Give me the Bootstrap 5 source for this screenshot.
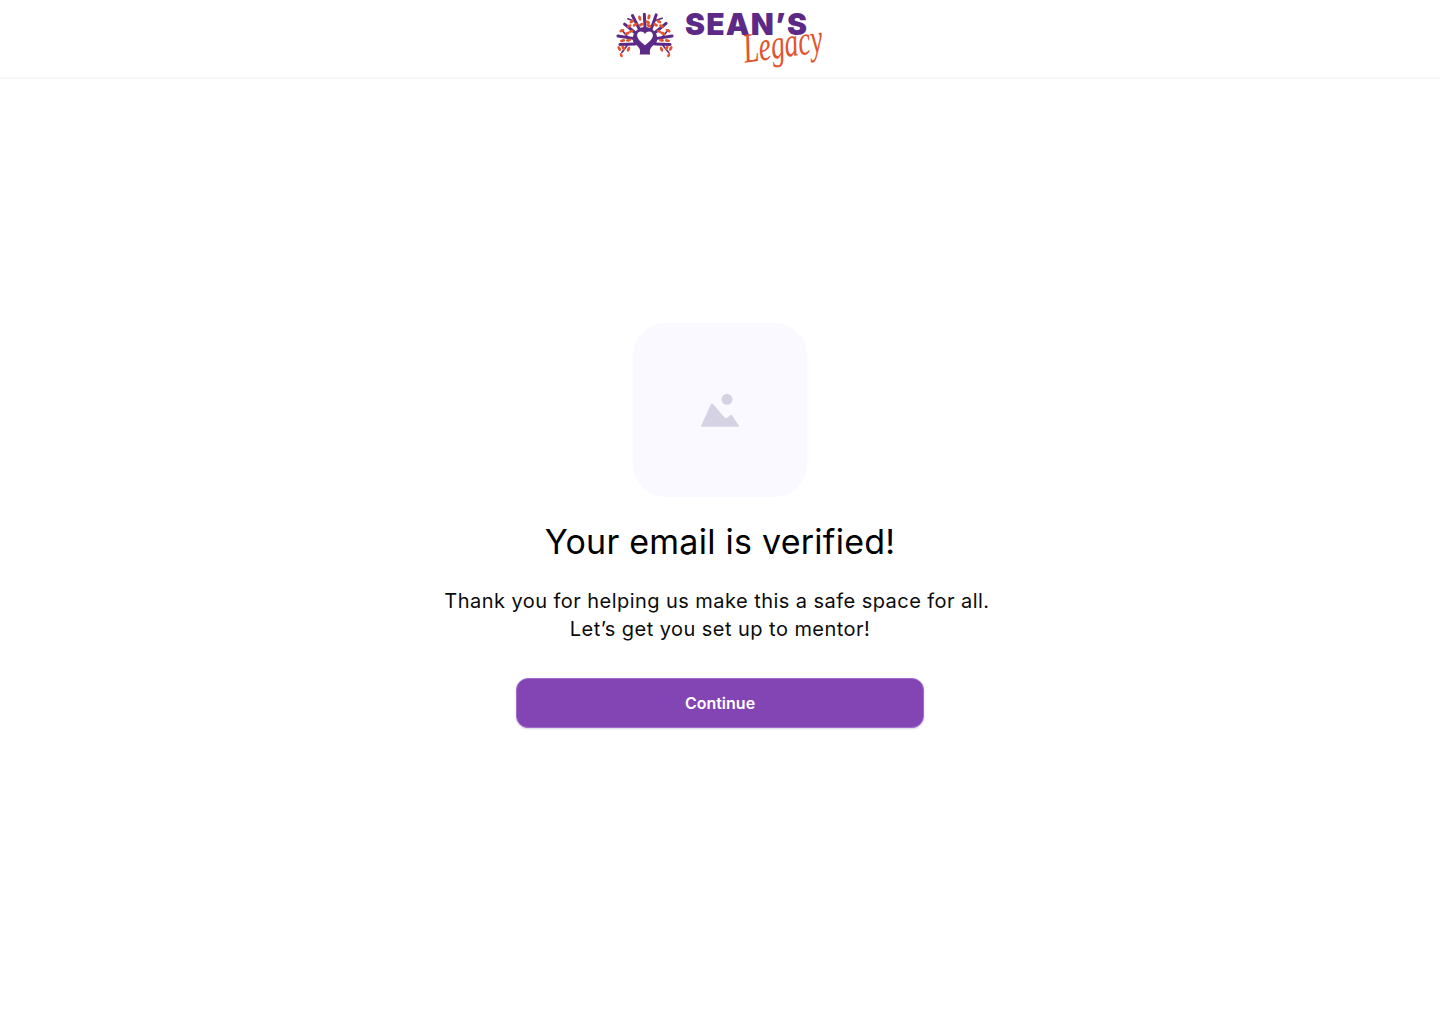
<!doctype html>
<html lang="en">
<head>
<meta charset="utf-8">
<title>Email verified</title>
<link href="https://cdn.jsdelivr.net/npm/bootstrap@5.3.0/dist/css/bootstrap.min.css" rel="stylesheet">
<style>
html,body{height:100%}
body{background:#fff;color:#000;font-family:Inter,"Liberation Sans",sans-serif}
.top-bar{height:79px;border-bottom:2px solid #f6f6f6}
.brand-mark{position:relative;width:216px;height:62px;margin-top:5px;color:inherit;text-decoration:none}
.brand-tree{width:66px;height:52px;margin-top:3px;flex:none}
.brand-name{font-family:Inter,"Liberation Sans",sans-serif;font-weight:900;font-size:30px;line-height:30px;color:#5c2a86;letter-spacing:1.2px;position:absolute;left:73px;top:4px}
.brand-script{font-family:"Liberation Serif",serif;font-style:italic;font-size:42px;line-height:42px;color:#e2532f;position:absolute;left:131px;top:23px;transform:rotate(-8deg) scaleX(.66);transform-origin:left center}
.page-body{height:945px;padding-top:244px}
.pic-tile{width:174px;height:174px;border-radius:32px;background:#faf9ff}
.verified-title{font-family:Inter,"Liberation Sans",sans-serif;font-size:34px;font-weight:400;line-height:44px;letter-spacing:.25px;margin:23px 0 23px}
.verified-text{font-family:Inter,"Liberation Sans",sans-serif;font-size:20px;line-height:28px;letter-spacing:.45px;margin-bottom:35px;color:#0b0b0b}
.continue-btn{width:408px;height:50px;border-radius:12px;background:#8245b3;border:1px solid #a06bcb;color:#fff;font-weight:600;font-size:16px;box-shadow:0 1px 2px rgba(60,30,90,.2)}
.continue-btn:hover{background:#7539a6;color:#fff}
</style>
</head>
<body>
<header class="top-bar d-flex justify-content-center">
  <a class="brand-mark d-flex" href="#">
    <svg class="brand-tree" viewBox="0 0 200 156" aria-hidden="true">
      <g fill="none" stroke="#5c2a86" stroke-linecap="round">
        <g stroke-width="9">
          <path d="M100 60 L98 18"/><path d="M84 65 L62 22"/><path d="M118 65 L134 20"/>
          <path d="M75 78 L38 48"/><path d="M125 78 L164 46"/>
          <path d="M68 92 L18 84"/><path d="M132 92 L182 84"/>
          <path d="M70 108 L24 110"/><path d="M130 108 L176 110"/>
        </g>
        <g stroke-width="5">
          <path d="M70 40 L48 32"/><path d="M128 38 L152 30"/>
          <path d="M48 88 L30 66"/><path d="M152 88 L170 66"/>
          <path d="M48 110 L30 134"/><path d="M152 110 L172 134"/>
        </g>
      </g>
      <path fill="#5c2a86" d="M84 140 C88 125 82 116 66 106 C56 84 70 60 100 56 C130 60 144 84 134 106 C118 116 112 125 116 140 Z"/>
      <path fill="#fff" d="M100 112 C90 104 76 94 76 82 C76 70 92 66 100 78 C108 66 124 70 124 82 C124 94 110 104 100 112 Z"/>
      <g fill="#e2532f">
        <ellipse cx="84" cy="30" rx="4.5" ry="8" transform="rotate(-15 84 30)"/><ellipse cx="88" cy="50" rx="4.5" ry="8" transform="rotate(60 88 50)"/>
        <ellipse cx="112" cy="26" rx="4.5" ry="8" transform="rotate(15 112 26)"/><ellipse cx="108" cy="42" rx="4.5" ry="8" transform="rotate(-60 108 42)"/><ellipse cx="112" cy="53" rx="4.5" ry="8" transform="rotate(-70 112 53)"/>
        <ellipse cx="60" cy="40" rx="4.5" ry="8" transform="rotate(60 60 40)"/><ellipse cx="70" cy="50" rx="4.5" ry="8" transform="rotate(60 70 50)"/><ellipse cx="52" cy="54" rx="4.5" ry="8" transform="rotate(60 52 54)"/>
        <ellipse cx="142" cy="40" rx="4.5" ry="8" transform="rotate(-60 142 40)"/><ellipse cx="132" cy="50" rx="4.5" ry="8" transform="rotate(-60 132 50)"/><ellipse cx="150" cy="54" rx="4.5" ry="8" transform="rotate(-60 150 54)"/>
        <ellipse cx="30" cy="68" rx="4.5" ry="8" transform="rotate(70 30 68)"/><ellipse cx="46" cy="76" rx="4.5" ry="8" transform="rotate(70 46 76)"/><ellipse cx="58" cy="70" rx="4" ry="7" transform="rotate(70 58 70)"/>
        <ellipse cx="170" cy="68" rx="4.5" ry="8" transform="rotate(-70 170 68)"/><ellipse cx="154" cy="76" rx="4.5" ry="8" transform="rotate(-70 154 76)"/><ellipse cx="142" cy="70" rx="4" ry="7" transform="rotate(-70 142 70)"/>
        <ellipse cx="32" cy="98" rx="4.5" ry="8" transform="rotate(80 32 98)"/><ellipse cx="50" cy="97" rx="4.5" ry="8" transform="rotate(80 50 97)"/>
        <ellipse cx="168" cy="98" rx="4.5" ry="8" transform="rotate(-80 168 98)"/><ellipse cx="150" cy="97" rx="4.5" ry="8" transform="rotate(-80 150 97)"/>
        <ellipse cx="22" cy="122" rx="4.5" ry="8" transform="rotate(-30 22 122)"/><ellipse cx="34" cy="120" rx="4.5" ry="8" transform="rotate(-30 34 120)"/><ellipse cx="50" cy="124" rx="4.5" ry="8" transform="rotate(25 50 124)"/><ellipse cx="28" cy="142" rx="4" ry="7" transform="rotate(-25 28 142)"/>
        <ellipse cx="178" cy="122" rx="4.5" ry="8" transform="rotate(30 178 122)"/><ellipse cx="166" cy="120" rx="4.5" ry="8" transform="rotate(30 166 120)"/><ellipse cx="150" cy="124" rx="4.5" ry="8" transform="rotate(-25 150 124)"/><ellipse cx="172" cy="142" rx="4" ry="7" transform="rotate(25 172 142)"/>
      </g>
    </svg>
    <span class="brand-name">SEAN’S</span>
    <span class="brand-script">Legacy</span>
  </a>
</header>
<main class="page-body d-flex flex-column align-items-center text-center">
  <div class="pic-tile d-flex align-items-center justify-content-center">
    <svg width="38" height="35" viewBox="0 0 38 35" aria-hidden="true">
      <circle cx="26" cy="6.3" r="5.5" fill="#d5d2e3"/>
      <path fill="#d5d2e3" d="M0 33 L10 11 Q10.8 9.8 12 11 L23.5 24.5 Q25 26 26.5 24.5 L29 22.2 Q30.2 21.2 31.2 22.4 L38 33 Q38.2 33.8 37 33.8 L1 33.8 Q-.2 33.8 0 33 Z"/>
    </svg>
  </div>
  <h1 class="verified-title">Your email is verified!</h1>
  <p class="verified-text">Thank you for helping us make this a safe space for all.&nbsp;<br>Let’s get you set up to mentor!</p>
  <button type="button" class="btn continue-btn">Continue</button>
</main>
<script src="https://cdn.jsdelivr.net/npm/bootstrap@5.3.0/dist/js/bootstrap.bundle.min.js"></script>
</body>
</html>
